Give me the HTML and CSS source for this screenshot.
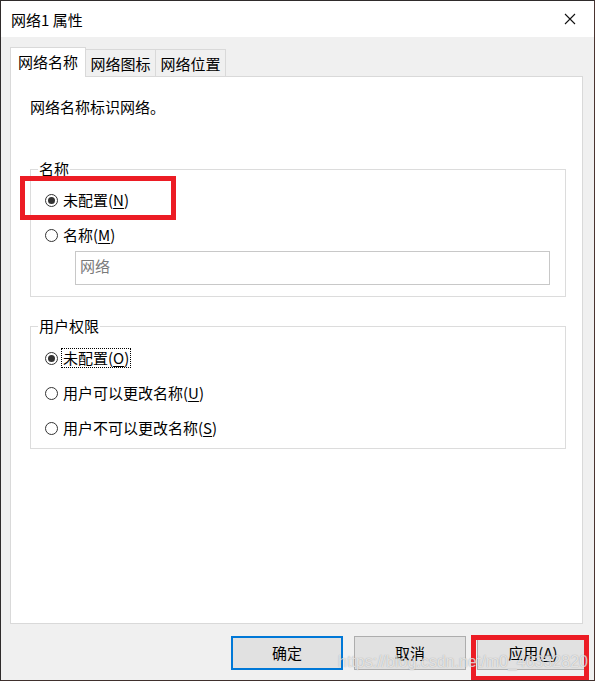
FILE: index.html
```html
<!DOCTYPE html>
<html lang="zh-CN">
<head>
<meta charset="utf-8">
<title>网络1 属性</title>
<link rel="stylesheet" href="styles.css">
</head>
<body>
<div class="window">
  <div class="titlebar">
    <span class="title">网络1 属性</span>
    <span class="close">
      <svg width="12" height="12" viewBox="0 0 12 12"><path d="M1 1L11 11M11 1L1 11" stroke="#111" stroke-width="1.1" fill="none"/></svg>
    </span>
  </div>
  <div class="content">
    <div class="tabs">
      <div class="tab tab-active">网络名称</div>
      <div class="tab">网络图标</div>
      <div class="tab">网络位置</div>
    </div>
    <div class="panel">
      <div class="desc">网络名称标识网络。</div>
      <fieldset class="group group-name">
        <legend>名称</legend>
        <div class="row row-first"><span class="radio checked"></span><span class="lbl">未配置(<u>N</u>)</span></div>
        <div class="row"><span class="radio"></span><span class="lbl">名称(<u>M</u>)</span></div>
        <div class="input">网络</div>
      </fieldset>
      <fieldset class="group group-perm">
        <legend>用户权限</legend>
        <div class="row row-first"><span class="radio checked"></span><span class="lbl focus">未配置(<u>O</u>)</span></div>
        <div class="row"><span class="radio"></span><span class="lbl">用户可以更改名称(<u>U</u>)</span></div>
        <div class="row"><span class="radio"></span><span class="lbl">用户不可以更改名称(<u>S</u>)</span></div>
      </fieldset>
    </div>
    <div class="buttons">
      <div class="btn btn-default">确定</div>
      <div class="btn">取消</div>
      <div class="btn">应用(<u>A</u>)</div>
    </div>
  </div>
  <div class="mark mark-1"></div>
  <div class="mark mark-2"></div>
  <div class="watermark">https://blog.csdn.net/m0_46332820</div>
</div>
</body>
</html>
```
FILE: styles.css
```css
* { box-sizing: border-box; }
html, body { margin: 0; padding: 0; background: #fff; }
body {
  font-family: "Noto Sans CJK SC", "Noto Sans", sans-serif;
  font-size: 15px;
  color: #000;
}
.window {
  position: relative;
  width: 595px;
  height: 681px;
  border: 1px solid #2f2b2b;
  border-right-color: #4a3430;
  border-bottom-color: #3f302d;
  background: #f0f0f0;
  overflow: hidden;
}
.titlebar {
  height: 36px;
  background: #fff;
  display: flex;
  align-items: center;
  justify-content: space-between;
  padding-left: 10px;
}
.title { font-size: 15px; line-height: 20px; color: #000; padding-top: 1px; }
.close {
  width: 46px;
  height: 36px;
  display: flex;
  align-items: center;
  justify-content: center;
  margin-right: 1px;
}
.content { padding: 10px 11px 0 9px; }
.tabs {
  display: flex;
  align-items: flex-end;
  height: 29px;
}
.tab {
  height: 27px;
  width: 71px;
  margin-left: -1px;
  border: 1px solid #d9d9d9;
  border-bottom: none;
  background: #f0f0f0;
  display: flex;
  align-items: center;
  justify-content: center;
  line-height: 20px;
  font-size: 15px;
  padding-top: 1px;
}
.tab-active {
  width: 76px;
  height: 30px;
  margin-left: 0;
  margin-bottom: -1px;
  background: #fff;
  position: relative;
  z-index: 1;
  padding-bottom: 2px;
}
.panel {
  width: 573px;
  height: 548px;
  background: #fff;
  border: 1px solid #d9d9d9;
  padding: 0 16px 0 19px;
}
.desc {
  padding-top: 20px;
  line-height: 20px;
}
.group {
  margin: 0;
  padding: 0;
  border: 1px solid #dcdcdc;
  min-width: 0;
}
.group legend {
  margin-left: 7px;
  padding: 0 1px;
  line-height: 20px;
  height: 20px;
}
.group-name { margin-top: 42px; padding-bottom: 11px; }
.group-perm { margin-top: 19px; padding-bottom: 5px; }
.row {
  height: 30px;
  display: flex;
  align-items: center;
  padding-left: 14px;
  margin-top: 5px;
}
.group-name .row { margin-top: 5px; }
.group-name .row-first { margin-top: 6px; }
.group-perm .row-first { margin-top: 7px; }
.radio {
  width: 13px;
  height: 13px;
  border: 1px solid #333;
  border-radius: 50%;
  background: #fff;
  display: flex;
  align-items: center;
  justify-content: center;
  flex: none;
}
.radio.checked::after {
  content: "";
  width: 7px;
  height: 7px;
  border-radius: 50%;
  background: #333;
}
.lbl {
  margin-left: 3px;
  line-height: 18px;
  padding: 0 1px;
  border: 1px solid transparent;
}
.lbl.focus { border: 1px dotted #000; }
u { text-decoration: underline; text-underline-offset: 2px; }
.input {
  margin: 1px 15px 0 44px;
  height: 34px;
  border: 1px solid #c8c8c8;
  color: #7a7a7a;
  padding: 0 4px;
  line-height: 28px;
}
.buttons {
  display: flex;
  justify-content: flex-end;
  gap: 11px;
  margin-top: 12px;
  margin-right: -6px;
}
.btn {
  width: 112px;
  height: 34px;
  background: #e1e1e1;
  border: 1px solid #adadad;
  display: flex;
  align-items: center;
  justify-content: center;
  line-height: 20px;
}
.btn-default { border: 2px solid #0078d7; }
.mark {
  position: absolute;
  border: 5px solid #ec1c24;
}
.mark-1 { left: 19px; top: 175px; width: 156px; height: 44px; }
.mark-2 { left: 470px; top: 634px; width: 118px; height: 46px; }
.watermark {
  position: absolute;
  left: 337px;
  top: 651px;
  font-family: "Liberation Sans", Arial, sans-serif;
  font-size: 16px;
  line-height: 20px;
  color: rgba(255, 255, 255, 0.7);
  text-shadow: 0 0 1px rgba(90, 90, 90, 0.55);
  white-space: nowrap;
}
```
